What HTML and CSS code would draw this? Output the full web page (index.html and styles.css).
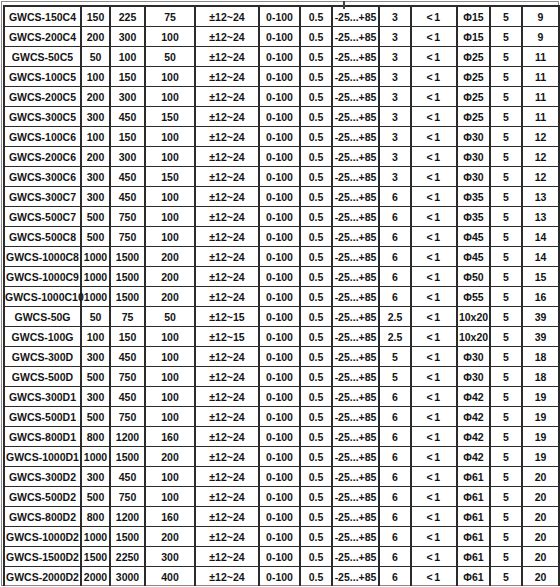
FILE: index.html
```html
<!DOCTYPE html>
<html>
<head>
<meta charset="utf-8">
<link rel="stylesheet" href="styles.css">
</head>
<body>
<div class="frame">
<span class="tick"></span>
<table class="spec">
<colgroup>
<col class="c1"><col class="c2"><col class="c3"><col class="c4"><col class="c5"><col class="c6"><col class="c7"><col class="c8"><col class="c9"><col class="c10"><col class="c11"><col class="c12"><col class="c13">
</colgroup>
<tbody>
<tr><td>GWCS-150C4</td><td>150</td><td>225</td><td>75</td><td>±12~24</td><td>0-100</td><td>0.5</td><td>-25...+85</td><td>3</td><td class="lt">&lt;1</td><td>Φ15</td><td>5</td><td>9</td></tr>
<tr><td>GWCS-200C4</td><td>200</td><td>300</td><td>100</td><td>±12~24</td><td>0-100</td><td>0.5</td><td>-25...+85</td><td>3</td><td class="lt">&lt;1</td><td>Φ15</td><td>5</td><td>9</td></tr>
<tr><td>GWCS-50C5</td><td>50</td><td>100</td><td>50</td><td>±12~24</td><td>0-100</td><td>0.5</td><td>-25...+85</td><td>3</td><td class="lt">&lt;1</td><td>Φ25</td><td>5</td><td>11</td></tr>
<tr><td>GWCS-100C5</td><td>100</td><td>150</td><td>100</td><td>±12~24</td><td>0-100</td><td>0.5</td><td>-25...+85</td><td>3</td><td class="lt">&lt;1</td><td>Φ25</td><td>5</td><td>11</td></tr>
<tr><td>GWCS-200C5</td><td>200</td><td>300</td><td>100</td><td>±12~24</td><td>0-100</td><td>0.5</td><td>-25...+85</td><td>3</td><td class="lt">&lt;1</td><td>Φ25</td><td>5</td><td>11</td></tr>
<tr><td>GWCS-300C5</td><td>300</td><td>450</td><td>150</td><td>±12~24</td><td>0-100</td><td>0.5</td><td>-25...+85</td><td>3</td><td class="lt">&lt;1</td><td>Φ25</td><td>5</td><td>11</td></tr>
<tr><td>GWCS-100C6</td><td>100</td><td>150</td><td>100</td><td>±12~24</td><td>0-100</td><td>0.5</td><td>-25...+85</td><td>3</td><td class="lt">&lt;1</td><td>Φ30</td><td>5</td><td>12</td></tr>
<tr><td>GWCS-200C6</td><td>200</td><td>300</td><td>100</td><td>±12~24</td><td>0-100</td><td>0.5</td><td>-25...+85</td><td>3</td><td class="lt">&lt;1</td><td>Φ30</td><td>5</td><td>12</td></tr>
<tr><td>GWCS-300C6</td><td>300</td><td>450</td><td>150</td><td>±12~24</td><td>0-100</td><td>0.5</td><td>-25...+85</td><td>3</td><td class="lt">&lt;1</td><td>Φ30</td><td>5</td><td>12</td></tr>
<tr><td>GWCS-300C7</td><td>300</td><td>450</td><td>100</td><td>±12~24</td><td>0-100</td><td>0.5</td><td>-25...+85</td><td>6</td><td class="lt">&lt;1</td><td>Φ35</td><td>5</td><td>13</td></tr>
<tr><td>GWCS-500C7</td><td>500</td><td>750</td><td>100</td><td>±12~24</td><td>0-100</td><td>0.5</td><td>-25...+85</td><td>6</td><td class="lt">&lt;1</td><td>Φ35</td><td>5</td><td>13</td></tr>
<tr><td>GWCS-500C8</td><td>500</td><td>750</td><td>100</td><td>±12~24</td><td>0-100</td><td>0.5</td><td>-25...+85</td><td>6</td><td class="lt">&lt;1</td><td>Φ45</td><td>5</td><td>14</td></tr>
<tr><td>GWCS-1000C8</td><td>1000</td><td>1500</td><td>200</td><td>±12~24</td><td>0-100</td><td>0.5</td><td>-25...+85</td><td>6</td><td class="lt">&lt;1</td><td>Φ45</td><td>5</td><td>14</td></tr>
<tr><td>GWCS-1000C9</td><td>1000</td><td>1500</td><td>200</td><td>±12~24</td><td>0-100</td><td>0.5</td><td>-25...+85</td><td>6</td><td class="lt">&lt;1</td><td>Φ50</td><td>5</td><td>15</td></tr>
<tr><td>GWCS-1000C10</td><td>1000</td><td>1500</td><td>200</td><td>±12~24</td><td>0-100</td><td>0.5</td><td>-25...+85</td><td>6</td><td class="lt">&lt;1</td><td>Φ55</td><td>5</td><td>16</td></tr>
<tr><td>GWCS-50G</td><td>50</td><td>75</td><td>50</td><td>±12~15</td><td>0-100</td><td>0.5</td><td>-25...+85</td><td>2.5</td><td class="lt">&lt;1</td><td>10x20</td><td>5</td><td>39</td></tr>
<tr><td>GWCS-100G</td><td>100</td><td>150</td><td>100</td><td>±12~15</td><td>0-100</td><td>0.5</td><td>-25...+85</td><td>2.5</td><td class="lt">&lt;1</td><td>10x20</td><td>5</td><td>39</td></tr>
<tr><td>GWCS-300D</td><td>300</td><td>450</td><td>100</td><td>±12~24</td><td>0-100</td><td>0.5</td><td>-25...+85</td><td>5</td><td class="lt">&lt;1</td><td>Φ30</td><td>5</td><td>18</td></tr>
<tr><td>GWCS-500D</td><td>500</td><td>750</td><td>100</td><td>±12~24</td><td>0-100</td><td>0.5</td><td>-25...+85</td><td>5</td><td class="lt">&lt;1</td><td>Φ30</td><td>5</td><td>18</td></tr>
<tr><td>GWCS-300D1</td><td>300</td><td>450</td><td>100</td><td>±12~24</td><td>0-100</td><td>0.5</td><td>-25...+85</td><td>6</td><td class="lt">&lt;1</td><td>Φ42</td><td>5</td><td>19</td></tr>
<tr><td>GWCS-500D1</td><td>500</td><td>750</td><td>100</td><td>±12~24</td><td>0-100</td><td>0.5</td><td>-25...+85</td><td>6</td><td class="lt">&lt;1</td><td>Φ42</td><td>5</td><td>19</td></tr>
<tr><td>GWCS-800D1</td><td>800</td><td>1200</td><td>160</td><td>±12~24</td><td>0-100</td><td>0.5</td><td>-25...+85</td><td>6</td><td class="lt">&lt;1</td><td>Φ42</td><td>5</td><td>19</td></tr>
<tr><td>GWCS-1000D1</td><td>1000</td><td>1500</td><td>200</td><td>±12~24</td><td>0-100</td><td>0.5</td><td>-25...+85</td><td>6</td><td class="lt">&lt;1</td><td>Φ42</td><td>5</td><td>19</td></tr>
<tr><td>GWCS-300D2</td><td>300</td><td>450</td><td>100</td><td>±12~24</td><td>0-100</td><td>0.5</td><td>-25...+85</td><td>6</td><td class="lt">&lt;1</td><td>Φ61</td><td>5</td><td>20</td></tr>
<tr><td>GWCS-500D2</td><td>500</td><td>750</td><td>100</td><td>±12~24</td><td>0-100</td><td>0.5</td><td>-25...+85</td><td>6</td><td class="lt">&lt;1</td><td>Φ61</td><td>5</td><td>20</td></tr>
<tr><td>GWCS-800D2</td><td>800</td><td>1200</td><td>160</td><td>±12~24</td><td>0-100</td><td>0.5</td><td>-25...+85</td><td>6</td><td class="lt">&lt;1</td><td>Φ61</td><td>5</td><td>20</td></tr>
<tr><td>GWCS-1000D2</td><td>1000</td><td>1500</td><td>200</td><td>±12~24</td><td>0-100</td><td>0.5</td><td>-25...+85</td><td>6</td><td class="lt">&lt;1</td><td>Φ61</td><td>5</td><td>20</td></tr>
<tr><td>GWCS-1500D2</td><td>1500</td><td>2250</td><td>300</td><td>±12~24</td><td>0-100</td><td>0.5</td><td>-25...+85</td><td>6</td><td class="lt">&lt;1</td><td>Φ61</td><td>5</td><td>20</td></tr>
<tr><td>GWCS-2000D2</td><td>2000</td><td>3000</td><td>400</td><td>±12~24</td><td>0-100</td><td>0.5</td><td>-25...+85</td><td>6</td><td class="lt">&lt;1</td><td>Φ61</td><td>5</td><td>20</td></tr>
</tbody>
</table>
</div>
</body>
</html>
```
FILE: styles.css
```css
html, body {
  margin: 0;
  padding: 0;
  background: #ffffff;
}

.frame {
  position: relative;
  margin: 1px 0 0 1px;
  width: 558px;
  height: 585px;
  border: 1px solid #8a8a8a;
  padding: 0;
  box-sizing: border-box;
}

.tick {
  position: absolute;
  left: 341px;
  top: -1px;
  width: 2px;
  height: 8px;
  background: #444;
}

.spec {
  margin: 3px 0 0 1px;
  border-collapse: collapse;
  table-layout: fixed;
  width: 555px;
  font-family: "Liberation Sans", Arial, sans-serif;
  font-weight: bold;
  font-size: 10.5px;
  color: #141414;
}

.spec td {
  height: 19px;
  padding: 0;
  border: 2px solid #2b2b2b;
  border-top-width: 1px;
  border-bottom-width: 1px;
  text-align: center;
  vertical-align: middle;
  white-space: nowrap;
  line-height: 12px;
}

.spec tr:first-child td {
  border-top: 2px solid #2b2b2b;
}

.spec td.lt {
  letter-spacing: 1.5px;
}

.c1 { width: 77px; }
.c2 { width: 29px; }
.c3 { width: 35px; }
.c4 { width: 50px; }
.c5 { width: 64px; }
.c6 { width: 41px; }
.c7 { width: 32px; }
.c8 { width: 47px; }
.c9 { width: 32px; }
.c10 { width: 46px; }
.c11 { width: 33px; }
.c12 { width: 32px; }
.c13 { width: 37px; }
```
